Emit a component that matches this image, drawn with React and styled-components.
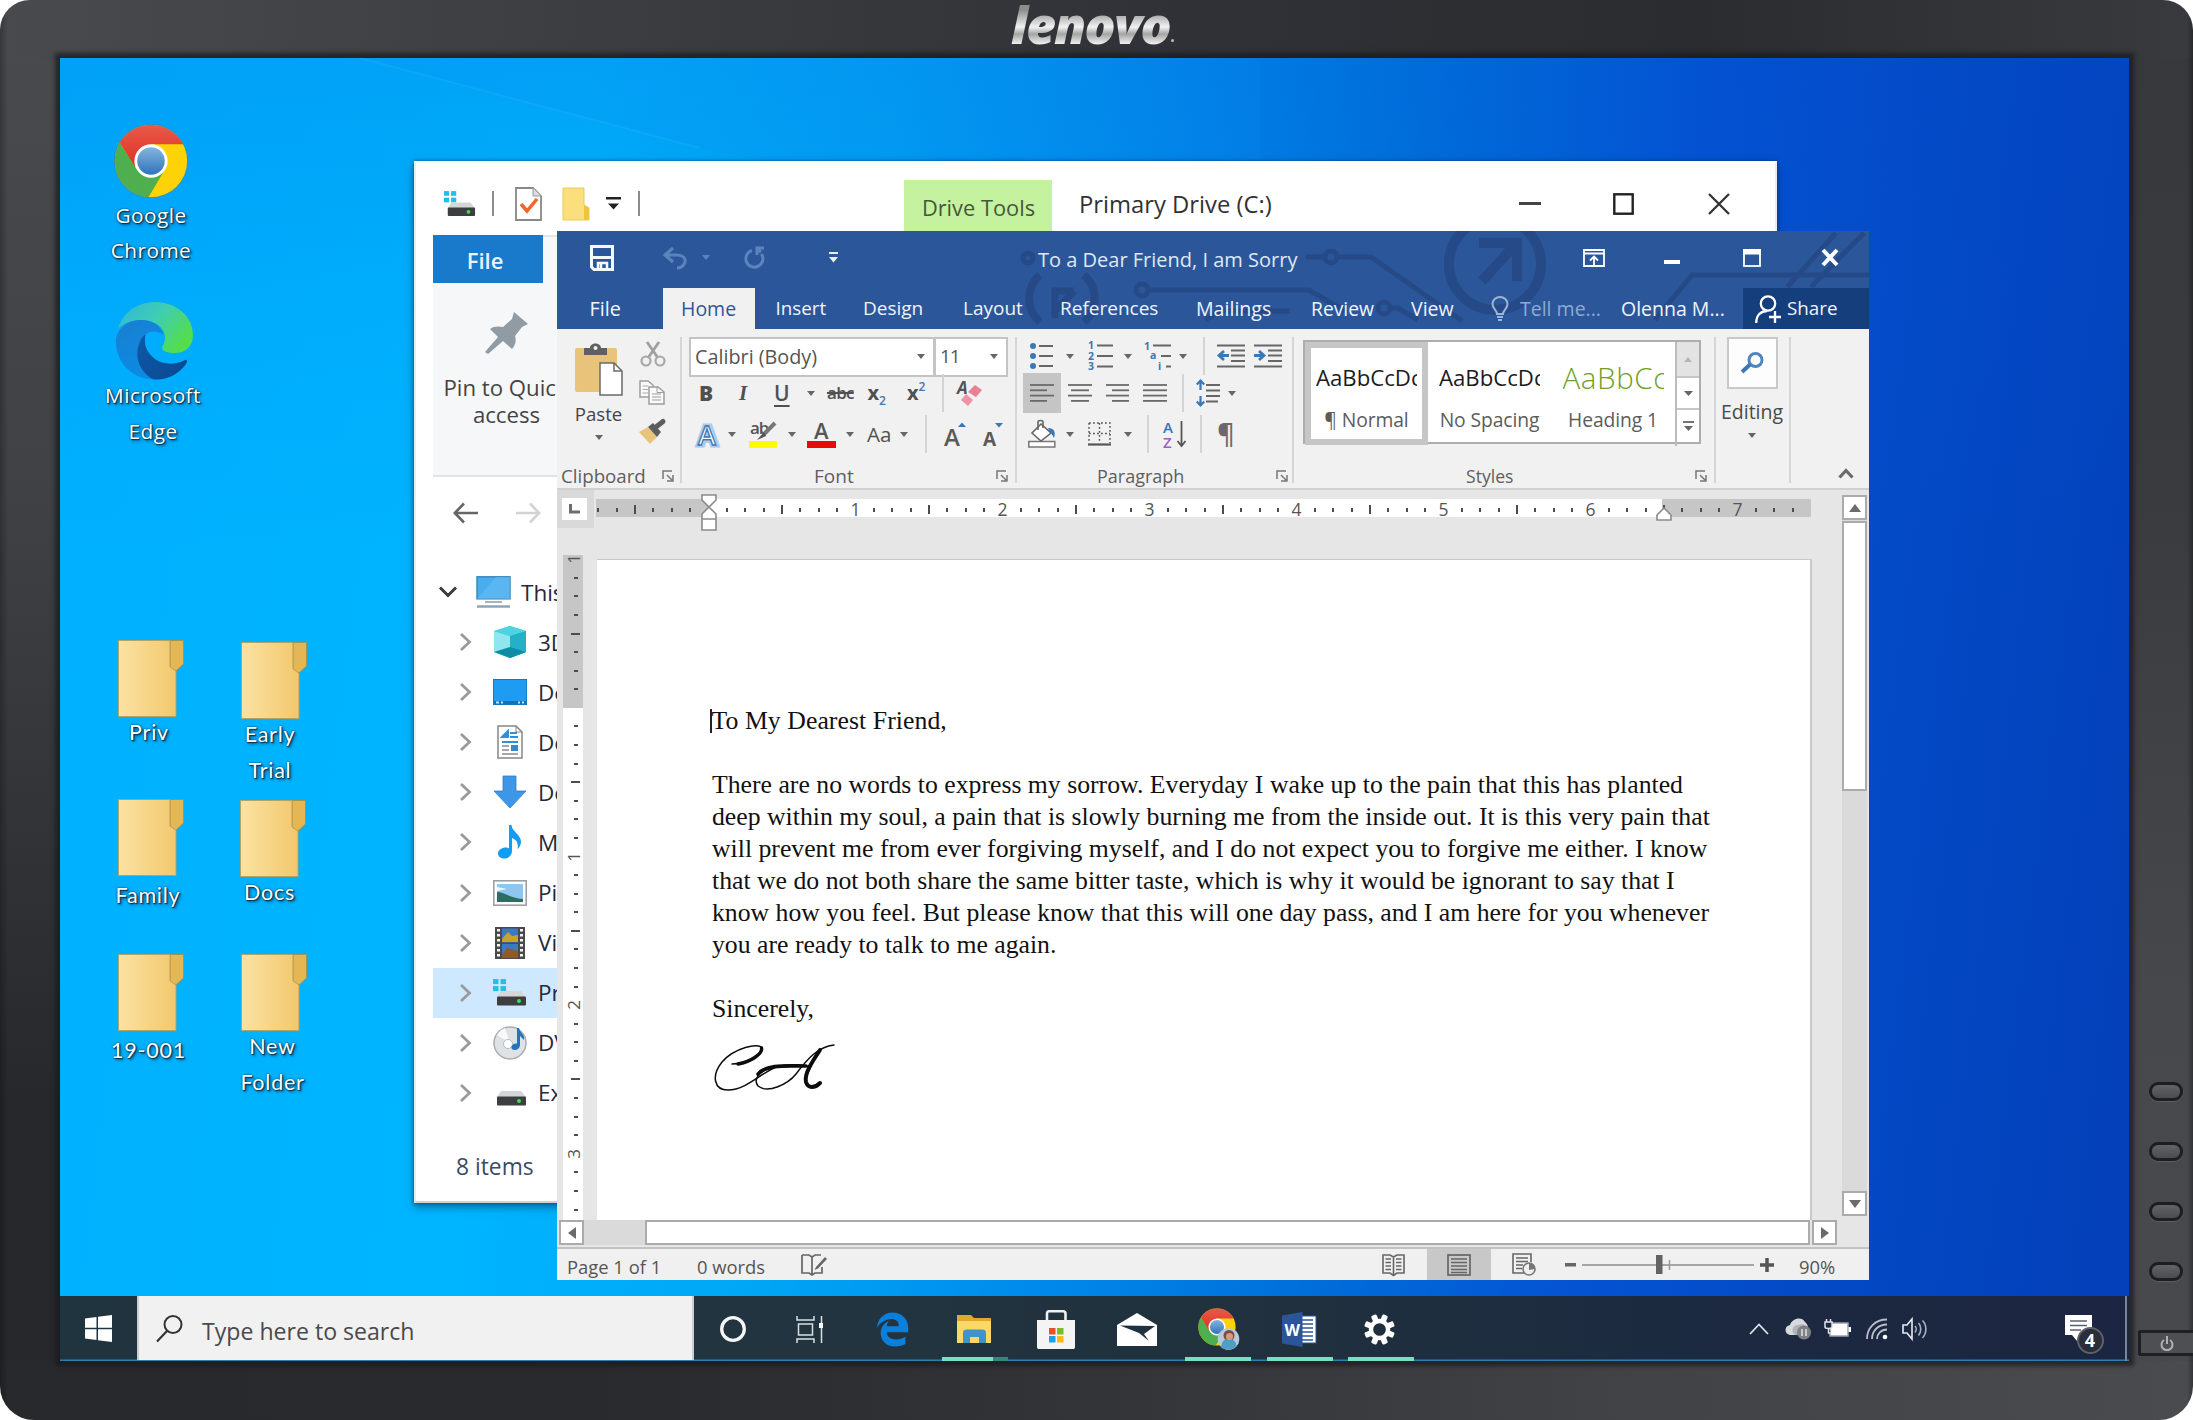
import React from 'react';
import styled, { createGlobalStyle, css } from 'styled-components';
import { FaEdgeLegacy } from 'react-icons/fa6';

const Global = createGlobalStyle`
  html, body { margin: 0; padding: 0; background: #fff; }
  body { width: 2193px; height: 1420px; overflow: hidden; font-family: "Open Sans", "Noto Sans", sans-serif; }
  *, *::before, *::after { box-sizing: border-box; }
  svg { display: block; flex: none; overflow: visible; }
`;

/* Turns a list of x stops into grid column widths. */
const tracks = (xs) => xs.slice(1).map((x, i) => `${(x - xs[i]).toFixed(1)}px`).join(' ');

/* ---------- Monitor ---------- */

const Monitor = styled.div`
  width: 2193px;
  height: 1420px;
  display: grid;
  grid-template-rows: 58px 1303px 59px;
  border-radius: 30px 30px 34px 34px;
  overflow: hidden;
  background:
    linear-gradient(90deg, rgba(0, 0, 0, 0.25) 0, transparent 8px, transparent 2187px, rgba(0, 0, 0, 0.3) 2193px),
    linear-gradient(90deg, #494a4e 0, #3a3b3f 700px, #303136 1200px, #2b2c30 1700px, #393a3d 2193px) 0 0 / 100% 58px no-repeat,
    linear-gradient(90deg, #28292d 0, #292a2e 600px, #333438 1100px, #414246 1600px, #4a4b4f 2193px) 0 100% / 100% 59px no-repeat,
    linear-gradient(180deg, #4a4b4f 0, #404145 500px, #27282c 1100px, #27282c 100%) 0 0 / 60px 100% no-repeat,
    linear-gradient(180deg, #37383b 0, #3a3b3e 500px, #47484b 1000px, #48494d 100%) 100% 0 / 64px 100% no-repeat,
    #303136;
`;

const BezelTop = styled.div`
  display: flex;
  align-items: flex-start;
  padding-left: 1011px;
`;

const Logo = styled.div`
  font: italic 800 52px/48px "Open Sans", sans-serif;
  letter-spacing: -2px;
  height: 58px;
  padding-right: 2px;
  color: transparent;
  background: linear-gradient(180deg, #8d8d8d 10px, #f2f2f2 27px, #a4a4a4 34px, #fff 46px);
  background-clip: text;
  -webkit-background-clip: text;
`;
const LogoDot = styled.div`
  width: 3px;
  height: 3px;
  border-radius: 50%;
  margin: 39px 0 0 -1px;
  background: #bbb;
`;

const Middle = styled.div`
  display: grid;
  grid-template-columns: 60px 2069px 64px;
`;
const LeftEdge = styled.div``;
const RightEdge = styled.div`
  display: flex;
  flex-direction: column;
  padding-top: 1024px;
`;
const BezelButton = styled.div`
  width: 34px;
  height: 19px;
  margin: 0 0 41px 20px;
  border: 3px solid #1d1e21;
  border-radius: 9px;
  background: linear-gradient(#626367, #4b4c50);
  box-shadow: 0 1px 1px rgba(255, 255, 255, 0.12);
`;
const PowerButton = styled.div`
  width: 55px;
  height: 26px;
  margin: 8px 0 0 9px;
  border: 3px solid #1f2023;
  border-right: 0;
  border-radius: 3px 0 0 3px;
  background: #4e4f53;
  display: grid;
  place-items: center;
`;

const Screen = styled.div`
  position: relative;
  display: flex;
  flex-direction: column;
  justify-content: flex-end;
  overflow: hidden;
  box-shadow: 0 0 4px 5px rgba(24, 26, 31, 0.72);
  background:
    linear-gradient(180deg, rgba(0, 70, 200, 0.15) 0, rgba(0, 80, 210, 0.06) 20%, transparent 38%),
    linear-gradient(97deg, #00b0ff 0, #00b5ff 24%, #00a6f6 38%, #0089eb 51%, #0070db 62%, #0454d3 74%, #0348c4 87%, #033fb8 100%);
`;

const Beam = styled.svg`
  position: absolute;
  left: 0;
  top: 0;
`;

/* ---------- Desktop shortcuts ---------- */

const Shortcut = styled.div`
  position: absolute;
  left: ${(p) => p.$x - 60 - 70}px;
  top: ${(p) => p.$y - 58}px;
  width: 140px;
  display: flex;
  flex-direction: column;
  align-items: center;
`;
const ShortcutLabel = styled.div`
  margin-top: ${(p) => p.$gap}px;
  margin-left: ${(p) => p.$shift || 0}px;
  text-align: center;
  white-space: pre;
  color: #fff;
  line-height: 35.5px;
  text-shadow: 1px 1px 1px #08334f, 0 0 2px rgba(0, 35, 65, 0.95), 2px 2px 3px rgba(0, 40, 70, 0.65);
  ${(p) => p.$soft
    ? css`font-family: Lato, "Open Sans", sans-serif; font-size: 21.5px; letter-spacing: 0.75px;`
    : css`font-size: 20.8px; letter-spacing: 0.45px;`}
`;

const ChromeIcon = ({ size, id }) => (
  <svg width={size} height={size} viewBox="0 0 100 100">
    <defs>
      <clipPath id={id}><circle cx="50" cy="50" r="49" /></clipPath>
      <linearGradient id={id + 'b'} x1="0" y1="0" x2="0" y2="1"><stop offset="0" stopColor="#86b4dd" /><stop offset="1" stopColor="#2f74bb" /></linearGradient>
      <linearGradient id={id + 'r'} x1="0" y1="0" x2="0" y2="1"><stop offset="0" stopColor="#ea5a48" /><stop offset="1" stopColor="#dd3228" /></linearGradient>
    </defs>
    <g clipPath={`url(#${id})`}>
      <rect width="100" height="100" fill="#fdd308" />
      <path d="M0 0V100H46L69 61L50 50L31 61L7 24Z" fill="#4fae4e" />
      <path d="M7 24L0 0H100V27.5H50V50L28 57Z" fill={`url(#${id}r)`} />
    </g>
    <circle cx="50" cy="50" r="49.5" fill="none" stroke="#7a6a3a" strokeOpacity=".45" />
    <circle cx="50" cy="50" r="22.5" fill="#fff" />
    <circle cx="50" cy="50" r="18.6" fill={`url(#${id}b)`} />
  </svg>
);

const EdgeIcon = () => (
  <svg width="77" height="78" viewBox="0 0 77 78">
    <defs>
      <linearGradient id="eg" x1="0" y1="0" x2="1" y2=".6"><stop offset="0" stopColor="#2fb6dc" /><stop offset=".5" stopColor="#3fcdb4" /><stop offset="1" stopColor="#54dd4c" /></linearGradient>
      <linearGradient id="eb" x1=".1" y1="0" x2=".7" y2="1"><stop offset="0" stopColor="#1a7fd0" /><stop offset="1" stopColor="#0a8ce6" /></linearGradient>
      <linearGradient id="ed" x1="0" y1="0" x2="1" y2=".7"><stop offset="0" stopColor="#0d59a6" /><stop offset="1" stopColor="#0b4a94" /></linearGradient>
    </defs>
    <path d="M2 27C7 9 23 0 39 0C60 0 77 14 77 33C77 45 69 51 59 51C52 51 46 49 46 46C46 44 49 42 49 35C49 25 38 18 25 18C14 18 5 23 2 27Z" fill="url(#eg)" />
    <path d="M0 40C0 28 10 18 25 18C38 18 47 26 47 33C43 29 36 28 30 32C20 42 20 62 34 75L40 77.500C16 78 0 60 0 40Z" fill="url(#eb)" />
    <path d="M29.500 32C18 42 17 66 37 77.300C52 79 66 70 71 60C71.500 58 70 57.500 69 58C58 64 46 62 39 57C30 50 27.500 42 29.500 32Z" fill="url(#ed)" />
  </svg>
);

const FolderIcon = () => (
  <svg width="66" height="77" viewBox="0 0 66 77">
    <defs><linearGradient id="fg" x1="0" x2="1" y1="0" y2="0"><stop offset="0" stopColor="#fbe2a2" /><stop offset="1" stopColor="#f2c86d" /></linearGradient></defs>
    <path d="M52 .5H65.500V24L58 31L52 28Z" fill="#e4b754" stroke="#b08a3c" strokeWidth=".8" />
    <path d="M.5 .5H52V27L58 31V76.500H.5Z" fill="url(#fg)" stroke="#b5a05c" strokeWidth=".9" />
  </svg>
);

/* ---------- Shared window parts ---------- */

const Tri = styled.i`
  display: block;
  width: 0;
  height: 0;
  border: 4.500px solid transparent;
  border-top: 5px solid ${(p) => p.$c || '#666'};
  border-bottom: 0;
  justify-self: start;
`;
const StopRow = styled.div`
  display: grid;
  grid-template-columns: ${(p) => tracks(p.$stops)};
  align-items: center;
  white-space: nowrap;
`;

/* ---------- Explorer ---------- */

const Explorer = styled.section`
  position: absolute;
  left: 354px;
  top: 103px;
  width: 1363px;
  height: 1042px;
  background: #fff;
  border: 2px solid #e9edf0;
  border-top-color: #fff;
  border-bottom-color: #cfd3d6;
  box-shadow: 0 4px 8px rgba(0, 45, 80, 0.55), 0 0 3px rgba(0, 45, 80, 0.6);
  display: flex;
  flex-direction: column;
`;
const ExplorerTitle = styled(StopRow)`
  height: 72px;
  padding: 8px 0 0 0;
  margin-left: -1px;
  flex: none;
`;
const Bar = styled.div`
  width: 2px;
  height: 25px;
  background: #8d8d8d;
`;
const DriveTools = styled.div`
  align-self: stretch;
  width: 148px;
  margin-top: 9px;
  background: #c5f29f;
  color: #46583a;
  font-size: 21.8px;
  line-height: 56px;
  text-align: center;
`;
const ExplorerName = styled.div`
  font-size: 23.800px;
  color: #333;
`;
const NavPane = styled.div`
  width: 180px;
  margin-left: 17px;
  flex: 1;
  display: flex;
  flex-direction: column;
`;
const ExplorerTabs = styled.div`
  height: 48px;
  display: flex;
  background: #f6f7f9;
  border-top: 2px solid #e4e6e9;
`;
const FileTab = styled.div`
  width: 110px;
  margin-top: -2px;
  background: #1979ca;
  color: #e9f3fb;
  font: 600 22px/50px "Open Sans", sans-serif;
  text-align: center;
  padding-right: 6px;
`;
const PinPane = styled.div`
  height: 194px;
  background: #f6f7f9;
  border-bottom: 2px solid #e1e3e6;
  padding: 29px 0 0 10px;
  color: #444;
  font-size: 22.200px;
  line-height: 27px;
  white-space: nowrap;
`;
const PinGlyph = styled.div`
  margin: 0 0 20px 42px;
`;
const PinText = styled.div`
  width: 125px;
  text-align: center;
  margin-left: ${(p) => p.$x || 0}px;
`;
const NavArrows = styled.div`
  height: 71px;
  display: flex;
  align-items: center;
  gap: 38px;
  padding-left: 20px;
`;
const TreeRow = styled.div`
  height: ${(p) => (p.$root ? 54 : 50.1)}px;
  display: grid;
  grid-template-columns: ${(p) => (p.$root ? '37px 45px 1fr' : '60px 45px 1fr')};
  padding-top: ${(p) => (p.$root ? 4 : 0)}px;
  align-items: center;
  padding-left: ${(p) => (p.$root ? 6 : 0)}px;
  font-size: 22.500px;
  color: #26283c;
  white-space: nowrap;
  background: ${(p) => (p.$on ? '#cde8ff' : 'transparent')};
  & > svg:first-child { margin-left: ${(p) => (p.$root ? 0 : 27)}px; }
`;
const Tree = styled.div`
  padding-top: 15px;
`;
const ItemCount = styled.div`
  margin: 29px 0 0 23px;
  font-size: 22.800px;
  line-height: 40px;
  color: #3d4a63;
`;

const DriveIcon = ({ w = 34, flag = true }) => (
  <svg width={w} height={w * 0.8} viewBox="0 0 34 27">
    {flag && <g fill="#24bfe6"><rect x="0" y="0" width="5.5" height="5" /><rect x="7.500" y="0" width="5.5" height="5" /><rect x="0" y="7" width="5.5" height="5" /><rect x="7.500" y="7" width="5.5" height="5" /></g>}
    <path d="M8 12H28L33 18H4Z" fill="#d4d6d8" />
    <rect x="4" y="17.500" width="29" height="9" rx="1" fill="#3c3e40" />
    <circle cx="26" cy="22" r="2" fill="#3ce04a" />
  </svg>
);
const ChevronRight = () => <svg width="11" height="18" viewBox="0 0 11 18"><path d="M1 1L9.500 9L1 17" fill="none" stroke="#9a9a9a" strokeWidth="2.800" /></svg>;

const treeIcons = {
  cube: <svg width="34" height="34" viewBox="0 0 34 34"><path d="M17 1L33 6V27L17 33L1 27V6Z" fill="#3cc7d8" /><path d="M1 6L17 11V33L1 27Z" fill="#8fe6ee" /><path d="M1 6L17 1L33 6L17 11Z" fill="#4fd3e0" /><path d="M17 11L33 6V27L17 33Z" fill="#24b0c8" /><path d="M1 27L17 22L33 27L17 33Z" fill="#0c8da5" /></svg>,
  desktop: <svg width="34" height="26" viewBox="0 0 34 26"><rect x=".5" y=".5" width="33" height="25" fill="#1e9bf3" stroke="#1579c0" /><path d="M1 22H33V25H1Z" fill="#1272b8" /><path d="M3 23.500H6M8 23.500H10M25 23.500H27M29 23.500H31" stroke="#bfe3ff" strokeWidth="2" /></svg>,
  doc: <svg width="34" height="34" viewBox="0 0 34 34"><path d="M5 1H23L29 7V33H5Z" fill="#fff" stroke="#868686" strokeWidth="1.500" /><path d="M23 1V7H29" fill="none" stroke="#868686" /><path d="M9 12L15 6V12ZM17 8H24M17 12H25M9 17H25" stroke="#2f8fdc" strokeWidth="2" fill="#2f8fdc" /><path d="M9 21H16M9 25H16M9 29H25" stroke="#8a8a8a" strokeWidth="1.500" /><rect x="18" y="20" width="7" height="6" fill="#3a87c8" /></svg>,
  down: <svg width="34" height="34" viewBox="0 0 34 34"><path d="M10 1H23V16H33L17 33L1 16H10Z" fill="#3d96e6" stroke="#2f7fca" strokeWidth=".8" /></svg>,
  music: <svg width="34" height="34" viewBox="0 0 34 34"><path d="M16 0H18.500C19 7 28 9 28 17C28 20 26 23 24.500 24C26 17 22 14 19 13V26C19 31 15 33.500 11 33.500C7 33.500 5 31 5 28.500C5 25 9 22.500 12.500 22.500C14 22.500 15 22.800 16 23.300Z" fill="#149cf0" /></svg>,
  pic: <svg width="34" height="26" viewBox="0 0 34 26"><rect x=".8" y=".8" width="32.400" height="24.400" fill="#fff" stroke="#9a9a9a" strokeWidth="1.500" /><rect x="4" y="4" width="26" height="18" fill="#8fc6ee" /><path d="M4 12C11 12 17 18 30 19V22H4Z" fill="#2e6e62" /><path d="M4 7L14 9L4 11Z" fill="#eef7fd" /></svg>,
  video: <svg width="34" height="34" viewBox="0 0 34 34"><rect x="2" y="1" width="30" height="32" fill="#4a4a4a" /><rect x="9" y="2.500" width="16" height="14" fill="#3d79c2" /><rect x="9" y="18" width="16" height="14" fill="#3d79c2" /><path d="M9 13L15 6L19 10L25 9V16H9Z" fill="#c9a227" /><path d="M9 29L14 22L25 25V32H9Z" fill="#8d5b2a" /><path d="M5.500 3V32M28.500 3V32" stroke="#f3f3f3" strokeWidth="3" strokeDasharray="2.500 2.500" /></svg>,
  prim: <DriveIcon w={34} />,
  dvd: <svg width="34" height="34" viewBox="0 0 34 34"><circle cx="17" cy="17" r="16" fill="#dfe2e5" stroke="#a9aeb2" strokeWidth="1.500" /><path d="M17 17L4 9A16 16 0 0 1 12 2Z" fill="#f8f9fa" /><circle cx="15" cy="18" r="4.500" fill="#fff" stroke="#b5babf" /><path d="M24 2H26C27 7 32 8 31 14L27 10V19C27 22 24 24 21.500 24C19 24 18 22 18.500 20.500C19 18.500 21.500 17 24 17.500Z" fill="#2474bb" /></svg>,
  ext: <DriveIcon w={34} flag={false} />,
};
const treeRows = [['cube', '3D Objects'], ['desktop', 'Desktop'], ['doc', 'Documents'], ['down', 'Downloads'], ['music', 'Music'], ['pic', 'Pictures'], ['video', 'Videos'], ['prim', 'Primary Drive'], ['dvd', 'DVD Drive'], ['ext', 'External Drive']];

const ExplorerWindow = () => (
  <Explorer>
    <ExplorerTitle $stops={[414, 442.6, 490.7, 514, 561, 605, 636.7, 903.5, 1078, 1518, 1612, 1707, 1774]}>
      <span />
      <DriveIcon w={32} />
      <Bar />
      <svg width="27" height="34" viewBox="0 0 27 34"><path d="M1 1H18L26 9V33H1Z" fill="#fff" stroke="#888" strokeWidth="1.800" /><path d="M18 1V9H26" fill="#ddd" stroke="#999" /><path d="M6 17L12 24L22 12" fill="none" stroke="#f0672c" strokeWidth="3.500" /></svg>
      <svg width="28" height="34" viewBox="0 0 28 34"><path d="M1 1H22V18L27 21V33H1Z" fill="#fadf7c" stroke="#e9c95c" /><path d="M22 18L27 21V33H22Z" fill="#eec53e" /></svg>
      <svg width="15" height="13" viewBox="0 0 15 13"><rect width="15" height="2.500" fill="#222" /><path d="M2 6.500H13L7.500 12.500Z" fill="#222" /></svg>
      <Bar />
      <DriveTools>Drive Tools</DriveTools>
      <ExplorerName>Primary Drive (C:)</ExplorerName>
      <svg width="22" height="4"><rect width="22" height="3" fill="#444" /></svg>
      <svg width="21" height="22"><rect x="1.300" y="1.300" width="18.400" height="19.400" fill="none" stroke="#222" strokeWidth="2.400" /></svg>
      <svg width="22" height="22"><path d="M1 1L21 21M21 1L1 21" stroke="#333" strokeWidth="2.300" /></svg>
    </ExplorerTitle>
    <NavPane>
      <ExplorerTabs><FileTab>File</FileTab></ExplorerTabs>
      <PinPane>
        <PinGlyph><svg width="43" height="42" viewBox="0 0 43 42"><path d="M29 0L43 12L37 15L30 24C32 30 29 35 27 37L18 29L3 42L0 40L13 25L5 17C8 14 14 14 18 15L27 7Z" fill="#909ba3" /></svg></PinGlyph>
        <PinText>Pin to Quick</PinText>
        <PinText $x={1}>access</PinText>
      </PinPane>
      <NavArrows>
        <svg width="25" height="22" viewBox="0 0 25 22"><path d="M25 11H2M11 1.500L1.800 11L11 20.500" fill="none" stroke="#666" strokeWidth="2.600" /></svg>
        <svg width="25" height="22" viewBox="0 0 25 22"><path d="M0 11H23M14 1.500L23.200 11L14 20.500" fill="none" stroke="#d3d3d3" strokeWidth="2.600" /></svg>
      </NavArrows>
      <Tree>
        <TreeRow $root>
          <svg width="18" height="12" viewBox="0 0 18 12"><path d="M1 1.500L9 9.500L17 1.500" fill="none" stroke="#3a3a3a" strokeWidth="3" /></svg>
          <svg width="35" height="32" viewBox="0 0 35 32"><rect x="1" y=".8" width="33" height="22" fill="#49adf0" stroke="#3d88bb" strokeWidth="1.500" /><path d="M1 23L20 1H34V23Z" fill="#6cc0f6" opacity=".5" /><path d="M9 26H26" stroke="#a7b4bd" strokeWidth="2" /><path d="M1 30.500H34" stroke="#8fa5b5" strokeWidth="2.500" /></svg>
          <span>This PC</span>
        </TreeRow>
        {treeRows.map(([k, t]) => (
          <TreeRow key={k} $on={k === 'prim'}><ChevronRight />{treeIcons[k]}<span>{t}</span></TreeRow>
        ))}
      </Tree>
      <ItemCount>8 items</ItemCount>
    </NavPane>
  </Explorer>
);

/* ---------- Word ---------- */

const Word = styled.section`
  position: absolute;
  left: 497px;
  top: 173px;
  width: 1312px;
  height: 1049px;
  display: flex;
  flex-direction: column;
  overflow: hidden;
  background: #e6e6e6;
  color: #444;
  font-size: 19px;
`;
const WordHead = styled.header`
  position: relative;
  height: 98px;
  flex: none;
  background: #2b579a;
  overflow: hidden;
`;
const HeadArt = styled.svg`
  position: absolute;
  left: 0;
  top: 0;
`;
const TitleRow = styled(StopRow)`
  position: relative;
  height: 57px;
  padding-bottom: 4px;
  color: #dfe8f4;
`;
const WordTitle = styled.div`
  font-size: 20px;
  padding-top: 4px;
`;
const WinMin = styled.div`
  padding-top: 8px;
`;
const TabRow = styled.nav`
  position: relative;
  height: 41px;
  display: grid;
  grid-template-columns: ${(p) => tracks(p.$stops)};
  line-height: 41px;
  white-space: nowrap;
  color: #f0f4fa;
`;
const Tab = styled.div`
  font-size: ${(p) => p.$size || 19}px;
  color: ${(p) => (p.$dim ? '#8ea9d3' : 'inherit')};
`;
const HomeTab = styled.div`
  width: 92px;
  padding-left: 18px;
  font-size: 19.5px;
  background: #f1f1f1;
  color: #2b579a;
`;
const ShareTab = styled(Tab)`
  display: flex;
  align-items: center;
  gap: 6px;
  padding-left: 12px;
  background: #143f7c;
`;
const Center = styled.div`
  display: grid;
  align-items: center;
`;

const Ribbon = styled.div`
  height: 161px;
  flex: none;
  display: flex;
  background: #f1f1f1;
  border-bottom: 2px solid #d0d0d0;
`;
const Group = styled.div`
  width: ${(p) => p.$w}px;
  flex: none;
  margin: 8px 0 5px;
  border-right: 2px solid #d6d6d6;
  display: grid;
  grid-template-rows: 35px 42px 40px 15px 14px;
`;
const RibbonRow = styled(StopRow)``;
const GroupFoot = styled.div`
  grid-row: 5;
  display: flex;
  align-items: center;
  line-height: 14px;
  color: #5e5e5e;
  font-size: ${(p) => p.$size || 18.5}px;
  padding: 0 ${(p) => p.$r || 8}px 0 ${(p) => p.$l || 0}px;
  white-space: nowrap;
  & > svg { margin-left: auto; }
`;
const Divider = styled.div`
  width: 1.500px;
  height: 38px;
  background: #d4d4d4;
`;
const Combo = styled.div`
  height: 40px;
  width: ${(p) => p.$w}px;
  display: flex;
  align-items: center;
  justify-content: space-between;
  padding: 0 8px 2px 4px;
  background: #fff;
  border: 2px solid #c4c4c4;
  font-size: ${(p) => p.$size || 19.800}px;
  letter-spacing: ${(p) => p.$ls || 0}px;
  color: #555;
`;
const Letter = styled.span`
  font-size: ${(p) => p.$size || 21}px;
  font-weight: ${(p) => p.$weight || 400};
  font-style: ${(p) => (p.$italic ? 'italic' : 'normal')};
  font-family: ${(p) => (p.$serif ? '"Liberation Serif", serif' : 'inherit')};
  text-decoration: ${(p) => p.$deco || 'none'};
  text-underline-offset: 4px;
  text-decoration-thickness: 2px;
  letter-spacing: ${(p) => p.$ls || 0}px;
  line-height: 30px;
  color: ${(p) => p.$c || '#505050'};
`;
const Small = styled.small`
  font-size: 12px;
  font-weight: 600;
  color: #3a77b5;
  display: inline-block;
  line-height: 10px;
  transform: translateY(${(p) => p.$dy}px);
`;
const PasteCell = styled.div`
  grid-row: 1 / 4;
  display: grid;
  grid-template-columns: 82px 1fr;
`;
const PasteButton = styled.div`
  display: flex;
  flex-direction: column;
  align-items: center;
  padding-top: 6px;
  padding-left: 1px;
  font-size: 18.600px;
  line-height: 27px;
  color: #444;
`;
const ClipTools = styled.div`
  display: grid;
  grid-template-rows: 34px 42px 38px;
  align-items: center;
`;
const ActiveTool = styled.div`
  width: 38px;
  height: 40px;
  background: #c5c5c5;
  display: grid;
  place-items: center;
`;
const Gallery = styled.div`
  grid-row: 1 / 4;
  width: 398px;
  height: 104px;
  margin: 3px 0 0 9px;
  border: 2px solid #adadad;
  background: #fff;
  display: grid;
  grid-template-columns: 123px 123px 124px 24px;
`;
const Style = styled.div`
  margin: 0 0 1px;
  display: flex;
  flex-direction: column;
  align-items: center;
  justify-content: flex-start;
  padding-top: ${(p) => (p.$on ? 11 : 17)}px;
  border: ${(p) => (p.$on ? '6.500px solid #c6c6c6' : '0')};
  white-space: nowrap;
  color: #5c5c5c;
  line-height: 38px;
  font-size: 19.3px;
  letter-spacing: -0.1px;
`;
const Sample = styled.div`
  width: 101px;
  height: 42px;
  overflow: hidden;
  font-size: ${(p) => (p.$big ? 29.5 : 22.2)}px;
  font-weight: ${(p) => (p.$big ? 300 : 400)};
  letter-spacing: ${(p) => (p.$big ? 0.6 : 0)}px;
  line-height: 38px;
  color: ${(p) => (p.$big ? '#6fa025' : '#1c1c1c')};
`;
const GalleryScroll = styled.div`
  border-left: 2px solid #bdbdbd;
  display: grid;
  grid-template-rows: 36px 32px 32px;
  & > div { display: grid; place-items: center; border-bottom: 2px solid #c6c6c6; }
  & > div:first-child { background: #e3e3e3; }
  & > div:last-child { border: 0; }
`;
const EditingCell = styled.div`
  grid-row: 1 / 4;
  display: flex;
  flex-direction: column;
  align-items: center;
  padding-right: 1px;
  font-size: 19.500px;
  line-height: 26px;
  color: #4a4a4a;
`;
const FindBox = styled.div`
  width: 51px;
  height: 52px;
  border: 2px solid #c9c9c9;
  background: #fdfdfd;
  display: grid;
  place-items: center;
  margin-bottom: 10px;
`;
const Collapse = styled.div`
  padding: 139px 0 0 47px;
`;

const Launcher = () => (
  <svg width="12" height="12" viewBox="0 0 12 12"><path d="M1 9V1H10M5 5L10 10M11 5V11H5" fill="none" stroke="#777" strokeWidth="1.500" /></svg>
);
const Lines = ({ rows, w = 24 }) => (
  <svg width={w} height="18" viewBox={`0 0 ${w} 18`}>{rows.map(([a, b], i) => <path key={i} d={`M${a} ${1 + i * 5.3}H${b}`} stroke="#6a6a6a" strokeWidth="1.800" />)}</svg>
);

const Workspace = styled.div`
  height: 730px;
  flex: none;
  display: grid;
  grid-template-columns: 1285px 25px;
`;
const Canvas = styled.div`
  display: grid;
  grid-template-rows: 38px 1fr;
`;
const RulerRow = styled.div`
  display: flex;
`;
const TabSelector = styled.div`
  width: 37px;
  background: #fff;
  border: 5px solid #d9d9d9;
  border-width: 8px 7px 8px 5px;
  display: grid;
  place-items: center;
`;
const Ruler = styled.div`
  position: relative;
  width: 1215px;
  height: 18px;
  margin: 9px 0 0 2px;
  background: linear-gradient(90deg, #c6c6c6 112px, #fff 112px, #fff 1066px, #c6c6c6 1066px);
`;
const Ticks = styled.div`
  display: flex;
  height: 18px;
  margin-left: -7px;
`;
const Tick = styled.div`
  width: 18.38px;
  flex: none;
  display: flex;
  align-items: center;
  justify-content: center;
  font-size: 17.5px;
  line-height: 18px;
  color: #555;
  padding-top: ${(p) => (p.$kind === 'num' ? 1 : 3)}px;
  &::before {
    content: '';
    display: ${(p) => (p.$kind === 'num' ? 'none' : 'block')};
    width: 2px;
    height: ${(p) => (p.$kind === 'tall' ? 9 : p.$kind === 'dot' ? 4 : 0)}px;
    background: #4c4c4c;
  }
`;
const LeftMarker = styled.svg`
  position: absolute;
  left: 105px;
  top: -5px;
`;
const RightMarker = styled.svg`
  position: absolute;
  left: 1060px;
  top: 8px;
`;
const DocRow = styled.div`
  display: flex;
  overflow: hidden;
`;
const VRuler = styled.div`
  width: 20px;
  margin: 27px 14px 0 6px;
  flex: none;
  overflow: hidden;
  background: linear-gradient(180deg, #c6c6c6 153px, #fff 153px);
`;
const VTicks = styled.div`
  margin-top: -5px;
`;
const VTick = styled.div`
  height: 18.59px;
  width: 20px;
  display: flex;
  align-items: center;
  justify-content: center;
  font-size: 17px;
  line-height: 18px;
  color: #555;
  padding-left: ${(p) => (p.$kind === 'num' ? 2 : 5)}px;
  & > span { transform: rotate(-90deg); }
  &::before {
    content: '';
    display: ${(p) => (p.$kind === 'num' ? 'none' : 'block')};
    height: 2px;
    width: ${(p) => (p.$kind === 'tall' ? 9 : p.$kind === 'dot' ? 4 : 0)}px;
    background: #4c4c4c;
  }
`;
const Page = styled.article`
  width: 1215px;
  margin-top: 31px;
  padding: 145px 0 0 115px;
  background: #fff;
  border-top: 1px solid #c9c9c9;
  border-right: 2px solid #c9c9c9;
  font: 25.740px/32px "Liberation Serif", "Times New Roman", serif;
  color: #111;
  white-space: nowrap;
`;
const Salutation = styled.p`
  margin: 0 0 32px;
  display: flex;
  align-items: center;
  letter-spacing: 0.06px;
  &::before { content: ''; width: 1.500px; height: 24px; background: #222; margin-left: -2px; }
`;
const Para = styled.p`
  margin: 0 0 31.500px;
  & > span { display: block; }
`;
const Signature = styled.div`
  margin: -12px 0 0 2px;
`;

const Arrow = styled.i`
  width: 0;
  height: 0;
  border: 6px solid transparent;
  ${(p) => p.$d === 'up' && css`border-bottom: 8px solid #6b6b6b; border-top: 0;`}
  ${(p) => p.$d === 'down' && css`border-top: 8px solid #6b6b6b; border-bottom: 0;`}
  ${(p) => p.$d === 'left' && css`border-right: 8px solid #6b6b6b; border-left: 0;`}
  ${(p) => p.$d === 'right' && css`border-left: 8px solid #6b6b6b; border-right: 0;`}
`;
const ScrollButton = styled.div`
  width: 25px;
  height: 25px;
  flex: none;
  background: #fff;
  border: 2px solid #ababab;
  display: grid;
  place-items: center;
`;
const VScroll = styled.div`
  margin-top: 5px;
  display: flex;
  flex-direction: column;
`;
const VTrack = styled.div`
  height: 671px;
  padding-top: 1px;
  background: #dadada;
`;
const VThumb = styled.div`
  height: 270px;
  background: #fff;
  border: 2px solid #ababab;
`;
const HScroll = styled.div`
  height: 29px;
  flex: none;
  display: flex;
  padding-left: 2px;
  border-bottom: 2px solid #c2c2c2;
`;
const HTrack = styled.div`
  width: 1226px;
  margin-right: 2px;
  height: 25px;
  background: #dadada;
  padding-left: 61px;
`;
const HThumb = styled.div`
  height: 25px;
  background: #fff;
  border: 2px solid #ababab;
`;
const Status = styled.footer`
  height: 31px;
  flex: none;
  display: grid;
  grid-template-rows: 31px;
  grid-template-columns: ${(p) => tracks(p.$stops)};
  align-items: center;
  background: #f0f0f0;
  font-size: 18.400px;
  line-height: 26px;
  white-space: nowrap;
  color: #555;
`;
const PrintView = styled.div`
  width: 64px;
  height: 31px;
  background: #c8c8c8;
  display: grid;
  place-items: center;
`;
const Down = styled.div`
  padding-top: 4px;
`;

const kindOf = (k) => (k === 0 ? 'none' : k % 8 === 0 ? 'num' : k % 4 === 0 ? 'tall' : 'dot');
const hTicks = Array.from({ length: 66 }, (_, i) => i - 6).filter((k) => k < 60);
const vTicks = Array.from({ length: 36 }, (_, i) => i - 8);

const lines = [
  'There are no words to express my sorrow. Everyday I wake up to the pain that this has planted',
  'deep within my soul, a pain that is slowly burning me from the inside out. It is this very pain that',
  'will prevent me from ever forgiving myself, and I do not expect you to forgive me either. I know',
  'that we do not both share the same bitter taste, which is why it would be ignorant to say that I',
  'know how you feel. But please know that this will one day pass, and I am here for you whenever',
  'you are ready to talk to me again.',
];

const WordHeader = () => (
  <WordHead>
    <HeadArt width="1312" height="98" viewBox="557 231 1312 98" fill="none" stroke="#254a87" strokeWidth="5">
      <circle cx="1495" cy="264" r="46" strokeWidth="10" />
      <path d="M1479 243H1517V281M1515 245L1482 281" strokeWidth="10" />
      <path d="M1040 275A31 31 0 0 0 1040 322M1084 275A31 31 0 0 1 1084 322" strokeWidth="8" />
      <path d="M1052 291H1074M1055 289V318M1074 291L1056 310" strokeWidth="7" />
      <circle cx="1028" cy="258" r="5" />
      <circle cx="1331" cy="257" r="6" />
      <path d="M1306 257H1325M1337 257H1371L1462 321" />
      <circle cx="1142" cy="290" r="6" />
      <path d="M1148 290H1309L1345 311M1205 320L1220 311H1290M1391 308H1398L1418 320" />
      <circle cx="1384" cy="308" r="6" />
      <path d="M1655 320L1692 275H1869M1836 233L1787 287M1864 233L1811 287" />
    </HeadArt>
    <TitleRow $stops={[557, 589.5, 663, 702, 743, 829, 1038, 1582.6, 1664, 1743, 1821, 1869]}>
      <span />
      <svg width="24" height="26" viewBox="0 0 24 26"><path d="M1.500 1.500H22.500V24.500H4L1.500 22Z" fill="none" stroke="#f4f7fb" strokeWidth="3" /><path d="M2 12.500H22" stroke="#f4f7fb" strokeWidth="3" /><path d="M8 25V18H17V25M11 19V25" stroke="#f4f7fb" strokeWidth="2.500" fill="none" /></svg>
      <svg width="25" height="22" viewBox="0 0 25 22"><path d="M10 1L2 8L10 15M2 8H14C21 8 24 13 21 17C20 19 17 21 14 21" fill="none" stroke="#5d83bf" strokeWidth="3" /></svg>
      <Tri $c="#5d83bf" />
      <svg width="23" height="23" viewBox="0 0 23 23"><path d="M21 2H14V9M14 3L18 6M9 4.500A8.500 8.500 0 1 0 18.500 8" fill="none" stroke="#5d83bf" strokeWidth="3" /></svg>
      <svg width="9" height="11" viewBox="0 0 9 11"><path d="M0 1H9" stroke="#e8eef7" strokeWidth="2" /><path d="M0 5H9L4.500 10.500Z" fill="#e8eef7" /></svg>
      <WordTitle>To a Dear Friend, I am Sorry</WordTitle>
      <svg width="22" height="18" viewBox="0 0 22 18"><path d="M1 1H21V17H1ZM1 4.500H21" fill="none" stroke="#fff" strokeWidth="1.800" /><path d="M11 16V7.500M7 11.500L11 7.500L15 11.500" fill="none" stroke="#fff" strokeWidth="1.800" /></svg>
      <WinMin><svg width="16" height="4"><rect width="16" height="4" fill="#fff" /></svg></WinMin>
      <svg width="18" height="18"><rect x="1" y="1" width="16" height="16" fill="none" stroke="#fff" strokeWidth="1.800" /><rect width="18" height="5.500" fill="#fff" /></svg>
      <svg width="18" height="17" viewBox="0 0 18 17"><path d="M2 1L16 16M16 1L2 16" stroke="#fff" strokeWidth="4" /></svg>
    </TitleRow>
    <TabRow $stops={[557, 589.5, 663, 775.5, 863, 963, 1060, 1196, 1311, 1411, 1491, 1520, 1621, 1743, 1869]}>
      <span />
      <Tab $size={19.800}>File</Tab>
      <HomeTab>Home</HomeTab>
      <Tab $size={18.800}>Insert</Tab>
      <Tab>Design</Tab>
      <Tab>Layout</Tab>
      <Tab>References</Tab>
      <Tab $size={19.600}>Mailings</Tab>
      <Tab $size={19.300}>Review</Tab>
      <Tab $size={19.500}>View</Tab>
      <Center><svg width="18" height="25" viewBox="0 0 18 25"><path d="M6 18C6 14 1.500 13 1.500 8A7.500 7 0 0 1 16.500 8C16.500 13 12 14 12 18ZM6 21H12M7 24H11" fill="none" stroke="#9db4d9" strokeWidth="2" /></svg></Center>
      <Tab $dim $size={19.500}>Tell me...</Tab>
      <Tab $size={19.500}>Olenna M...</Tab>
      <ShareTab $size={18.800}>
        <svg width="26" height="28" viewBox="0 0 26 28"><circle cx="13" cy="8.500" r="7.200" fill="none" stroke="#fff" strokeWidth="2.300" /><path d="M1.200 28C1.200 20 6 16 12 16M14 22H26M20 16V28" fill="none" stroke="#fff" strokeWidth="2.300" /></svg>
        Share
      </ShareTab>
    </TabRow>
  </WordHead>
);

const RibbonBar = () => (
  <Ribbon>
    <Group $w={125}>
      <PasteCell>
        <PasteButton>
          <svg width="48" height="53" viewBox="0 0 48 53"><rect x="0" y="5" width="42" height="44" rx="2" fill="#eac37b" /><path d="M9 5H15C15 -1 26 -1 26 5H32V12H9Z" fill="#5f5f5f" /><circle cx="20.500" cy="5" r="2" fill="#f1f1f1" /><path d="M25 20H39L47 28V52H25Z" fill="#fff" stroke="#6a6a6a" strokeWidth="1.500" /><path d="M39 20V28H47" fill="none" stroke="#6a6a6a" strokeWidth="1.500" /></svg>
          <Down>Paste</Down>
          <Down><Down><Tri /></Down></Down>
        </PasteButton>
        <ClipTools>
          <svg width="28" height="26" viewBox="0 0 28 26"><path d="M8 1L19 17M20 1L9 17" stroke="#a0a0a0" strokeWidth="2.800" /><circle cx="7" cy="20" r="4.500" fill="none" stroke="#a8a8a8" strokeWidth="2.200" /><circle cx="21" cy="20" r="4.500" fill="none" stroke="#a8a8a8" strokeWidth="2.200" /></svg>
          <svg width="26" height="25" viewBox="0 0 26 25"><path d="M1 1H9L14 5V17H1Z" fill="#fafafa" stroke="#9d9d9d" strokeWidth="1.500" /><path d="M3.500 6H9M3.500 9.500H9M3.500 13H9" stroke="#aaa" /><path d="M10 7H19L25 12V24H10Z" fill="#fafafa" stroke="#9d9d9d" strokeWidth="1.500" /><path d="M18 7V12.500H25M13 14H22M13 17H22M13 20H22" fill="none" stroke="#9d9d9d" /></svg>
          <svg width="27" height="25" viewBox="0 0 27 25"><path d="M0 12L9 7L18 17L11 24Z" fill="#eac37b" /><path d="M9 7L14 3L22 12L18 17Z" fill="#5d5d5d" /><path d="M17 7L24 1.500" stroke="#5d5d5d" strokeWidth="5" strokeLinecap="round" /></svg>
        </ClipTools>
      </PasteCell>
      <GroupFoot $l={4} $r={6} $size={18.700}>Clipboard<Launcher /></GroupFoot>
    </Group>

    <Group $w={335}>
      <RibbonRow $stops={[682, 689, 934, 1016]}>
        <span />
        <Combo $w={246}>Calibri (Body)<Tri /></Combo>
        <Combo $w={74} $size={19} $ls={-1}>11<Tri /></Combo>
      </RibbonRow>
      <RibbonRow $stops={[682, 699, 739, 774, 807, 827, 867.5, 907, 942, 958, 1016]}>
        <span />
        <Letter $weight={800}>B</Letter>
        <Letter $italic $serif $weight={700}>I</Letter>
        <Letter $weight={600} $deco="underline">U</Letter>
        <Tri />
        <Letter $size={17} $weight={600} $deco="line-through" $ls={-0.7}>abc</Letter>
        <Letter $weight={700} $size={20}>x<Small $dy={5}>2</Small></Letter>
        <Letter $weight={700} $size={20}>x<Small $dy={-9}>2</Small></Letter>
        <Divider />
        <svg width="24" height="26" viewBox="0 0 24 26"><text x="-1" y="14" fontSize="17" fontStyle="italic" fontWeight="700" fill="#555">A</text><path d="M17 5L24 10L18 17L10 12Z" fill="#ea8095" /><path d="M8 14L15 20L10 26L3 20Z" fill="#ee93a5" /></svg>
      </RibbonRow>
      <RibbonRow $stops={[682, 697, 728, 749, 788, 807, 846, 867, 900, 925, 944, 983, 1016]}>
        <span />
        <svg width="22" height="25" viewBox="0 0 22 25"><text x="1" y="23" fontSize="27" fontWeight="700" fill="#fff" stroke="#a9cbee" strokeWidth="5" paintOrder="stroke">A</text><text x="1" y="23" fontSize="27" fontWeight="600" fill="#fff" stroke="#4177b0" strokeWidth="1.400">A</text></svg>
        <Tri />
        <svg width="28" height="27" viewBox="0 0 28 27"><rect x="0" y="20" width="28" height="7" fill="#fdfb00" /><text x="1" y="13" fontSize="17" fontWeight="600" fill="#555" letterSpacing="-1">ab</text><path d="M26 2L14 14" stroke="#777" strokeWidth="4" /><path d="M15 11L8 19L17 15Z" fill="#555" /></svg>
        <Tri />
        <svg width="29" height="27" viewBox="0 0 29 27"><rect x="0" y="20" width="29" height="7" fill="#e60c0c" /><text x="7" y="18" fontSize="22" fontWeight="600" fill="#555">A</text></svg>
        <Tri />
        <Letter $size={20.500}>Aa</Letter>
        <Tri />
        <Divider />
        <svg width="23" height="26" viewBox="0 0 23 26"><text x="0" y="25" fontSize="24" fontWeight="600" fill="#5a5a5a">A</text><path d="M14 6L18 1.500L22 6Z" fill="#3a77b5" /></svg>
        <svg width="23" height="26" viewBox="0 0 23 26"><text x="0" y="25" fontSize="19" fontWeight="700" fill="#5a5a5a">A</text><path d="M12 2L20 2L16 6.500Z" fill="#3a77b5" /></svg>
      </RibbonRow>
      <GroupFoot $l={132} $r={8} $size={19}>Font<Launcher /></GroupFoot>
    </Group>

    <Group $w={277}>
      <RibbonRow $stops={[1017, 1030, 1066, 1088, 1124, 1144, 1179, 1203, 1217, 1254, 1294]}>
        <span />
        <svg width="24" height="26" viewBox="0 0 24 26"><g fill="#3a77b5"><circle cx="3" cy="3" r="3" /><circle cx="3" cy="13" r="3" /><circle cx="3" cy="23" r="3" /></g><path d="M9 3H23M9 13H23M9 23H23" stroke="#666" strokeWidth="2" /></svg>
        <Tri />
        <svg width="25" height="28" viewBox="0 0 25 28"><g fontSize="10.500" fontWeight="700" fill="#3a77b5"><text x="0" y="7">1</text><text x="0" y="17.500">2</text><text x="0" y="28">3</text></g><path d="M9 3.500H25M9 14H25M9 24.500H25" stroke="#666" strokeWidth="2" /></svg>
        <Tri />
        <svg width="28" height="28" viewBox="0 0 28 28"><g fontSize="10.500" fontWeight="700" fill="#3a77b5"><text x="0" y="8">1</text><text x="6" y="17">a</text><text x="14" y="28">i</text></g><path d="M9 3.500H27M17 14H27M22 24.500H27" stroke="#666" strokeWidth="2" /></svg>
        <Tri />
        <Divider />
        <svg width="28" height="24" viewBox="0 0 28 24"><path d="M0 1.500H28M14 6.500H28M14 11.500H28M14 17H28M0 22.500H28" stroke="#666" strokeWidth="1.800" /><path d="M12 11.500H2M7 7L2 11.500L7 16" fill="none" stroke="#3a77b5" strokeWidth="2.800" /></svg>
        <svg width="28" height="24" viewBox="0 0 28 24"><path d="M0 1.500H28M14 6.500H28M14 11.500H28M14 17H28M0 22.500H28" stroke="#666" strokeWidth="1.800" /><path d="M0 11.500H10M5 7L10 11.500L5 16" fill="none" stroke="#3a77b5" strokeWidth="2.800" /></svg>
      </RibbonRow>
      <RibbonRow $stops={[1017, 1023, 1068, 1106, 1143, 1182, 1196, 1228, 1294]}>
        <span />
        <ActiveTool><Lines rows={[[0, 24], [0, 17], [0, 24], [0, 17]]} /></ActiveTool>
        <Lines rows={[[0, 24], [3, 21], [0, 24], [3, 21]]} />
        <Lines rows={[[0, 23], [6, 23], [0, 23], [6, 23]]} />
        <Lines rows={[[0, 24], [0, 24], [0, 24], [0, 24]]} />
        <Divider />
        <svg width="24" height="28" viewBox="0 0 24 28"><path d="M4.500 2V11M.8 5.500L4.500 1.500L8.200 5.500M4.500 17V26M.8 22.500L4.500 26.500L8.200 22.500" fill="none" stroke="#3a77b5" strokeWidth="2.200" /><path d="M10 6H24M10 11.500H24M10 17H24M10 22.500H22" stroke="#666" strokeWidth="1.800" /></svg>
        <Tri />
      </RibbonRow>
      <RibbonRow $stops={[1017, 1028, 1066, 1088, 1124, 1147, 1163, 1200, 1217, 1294]}>
        <span />
        <svg width="28" height="28" viewBox="0 0 28 28"><rect x=".8" y="21.500" width="26" height="5.500" fill="#fff" stroke="#777" strokeWidth="1.500" /><path d="M13 4L23 13L13 21L4 13Z" fill="#fff" stroke="#666" strokeWidth="1.600" /><path d="M10 10V2C10 0 15 0 15 2V8" fill="none" stroke="#666" strokeWidth="1.600" /><path d="M20 8C26 8 28 12 26 18C24 14 23 13 22 13Z" fill="#3a77b5" /></svg>
        <Tri />
        <svg width="24" height="24" viewBox="0 0 24 24"><path d="M1 1H22V21M1 1V21M11.500 1V21M1 11.500H22" fill="none" stroke="#555" strokeWidth="1.500" strokeDasharray="1.800 2.200" /><path d="M0 22.500H23" stroke="#555" strokeWidth="2.200" /></svg>
        <Tri />
        <Divider />
        <svg width="24" height="27" viewBox="0 0 24 27"><text x="0" y="11.500" fontSize="15" fontWeight="600" fill="#3a77b5">A</text><text x="0" y="26.500" fontSize="15" fontWeight="600" fill="#9a5fc0">Z</text><path d="M18.500 0V25M14.500 20L18.500 25L22.500 20" fill="none" stroke="#555" strokeWidth="1.800" /></svg>
        <Divider />
        <Letter $size={27} $weight={600} $c="#6a6a6a">¶</Letter>
      </RibbonRow>
      <GroupFoot $l={80} $r={6} $size={18}>Paragraph<Launcher /></GroupFoot>
    </Group>

    <Group $w={422}>
      <Gallery>
        <Style $on><Sample>AaBbCcDc</Sample>¶ Normal</Style>
        <Style><Sample>AaBbCcDc</Sample>No Spacing</Style>
        <Style><Sample $big>AaBbCc</Sample>Heading 1</Style>
        <GalleryScroll>
          <div><svg width="8" height="5"><path d="M0 5L4 0L8 5Z" fill="#b5b5b5" /></svg></div>
          <div><svg width="9" height="5"><path d="M0 0H9L4.500 5Z" fill="#666" /></svg></div>
          <div><svg width="11" height="10"><path d="M0 1H11" stroke="#666" strokeWidth="1.800" /><path d="M1 5H10L5.500 10Z" fill="#666" /></svg></div>
        </GalleryScroll>
      </Gallery>
      <GroupFoot $l={172} $r={7} $size={17.600}>Styles<Launcher /></GroupFoot>
    </Group>

    <Group $w={75}>
      <EditingCell>
        <FindBox><svg width="24" height="22" viewBox="0 0 24 22"><circle cx="15.500" cy="8" r="6.500" fill="none" stroke="#4f86be" strokeWidth="3" /><path d="M10 12.500L2 20" stroke="#3a77b5" strokeWidth="4" /></svg></FindBox>
        Editing
        <Down><Down><Tri /></Down></Down>
      </EditingCell>
    </Group>
    <Collapse><svg width="16" height="11" viewBox="0 0 16 11"><path d="M1.500 9.500L8 2.500L14.500 9.500" fill="none" stroke="#6a6a6a" strokeWidth="3.200" /></svg></Collapse>
  </Ribbon>
);

const WordWindow = () => (
  <Word>
    <WordHeader />
    <RibbonBar />
    <Workspace>
      <Canvas>
        <RulerRow>
          <TabSelector><svg width="11" height="10"><path d="M1.500 0V8H11" fill="none" stroke="#6d6d6d" strokeWidth="3" /></svg></TabSelector>
          <Ruler>
            <Ticks>{hTicks.map((k) => <Tick key={k} $kind={kindOf(k)}>{kindOf(k) === 'num' ? k / 8 : null}</Tick>)}</Ticks>
            <LeftMarker width="16" height="37" viewBox="0 0 16 37"><path d="M1 1H15V6L8 13L1 6Z M8 13L15 20V25H1V20Z M1 25H15V36H1Z" fill="#fff" stroke="#8a8a8a" strokeWidth="1.600" /></LeftMarker>
            <RightMarker width="16" height="14" viewBox="0 0 16 14"><path d="M8 1L15 8V13H1V8Z" fill="#fff" stroke="#8a8a8a" strokeWidth="1.600" /></RightMarker>
          </Ruler>
        </RulerRow>
        <DocRow>
          <VRuler>
            <VTicks>{vTicks.map((k) => <VTick key={k} $kind={kindOf(k)}>{kindOf(k) === 'num' ? <span>{Math.abs(k / 8)}</span> : null}</VTick>)}</VTicks>
          </VRuler>
          <Page>
            <Salutation>To My Dearest Friend,</Salutation>
            <Para>{lines.map((l) => <span key={l}>{l}</span>)}</Para>
            <Para>Sincerely,</Para>
            <Signature>
              <svg width="122" height="50" viewBox="0 0 122 50" fill="none" stroke="#0c0c0c" strokeLinecap="round">
                <path d="M18 20C32 20 50 10 48 4C45 -2 20 4 8 18C-3 32 0 46 14 46C34 46 52 24 66 22C84 18 92 26 98 20" strokeWidth="1.500" />
                <path d="M24 20C36 18 49 10 47.500 4" strokeWidth="3.400" />
                <path d="M66 22C48 24 38 34 44 42C54 50 74 40 82 30C94 14 104 3 120 1" strokeWidth="1.500" />
                <path d="M44 30C52 20 74 22 92 22" strokeWidth="3.600" />
                <path d="M106 6C98 18 90 30 92 38C94 45 101 44 106 39" strokeWidth="4" />
              </svg>
            </Signature>
          </Page>
        </DocRow>
      </Canvas>
      <VScroll>
        <ScrollButton><Arrow $d="up" /></ScrollButton>
        <VTrack><VThumb /></VTrack>
        <ScrollButton><Arrow $d="down" /></ScrollButton>
      </VScroll>
    </Workspace>
    <HScroll>
      <ScrollButton><Arrow $d="left" /></ScrollButton>
      <HTrack><HThumb /></HTrack>
      <ScrollButton><Arrow $d="right" /></ScrollButton>
    </HScroll>
    <Status $stops={[557, 567, 697, 801, 1382, 1427, 1512, 1565, 1582, 1760, 1799, 1869]}>
      <span />
      <Down>Page 1 of 1</Down>
      <Down>0 words</Down>
      <svg width="26" height="23" viewBox="0 0 26 23"><path d="M1 2H8L11 4L14 2H20M1 2V20H8L11 22L14 20H21V14M11 4V22" fill="none" stroke="#666" strokeWidth="1.700" /><path d="M24 4L15 14L13.500 17L17 15.500L26 6Z" fill="#666" /></svg>
      <svg width="23" height="22" viewBox="0 0 23 22"><path d="M1 1H8L11.500 3L15 1H22V19H15L11.500 21.500L8 19H1ZM11.500 3V21" fill="none" stroke="#666" strokeWidth="1.600" /><path d="M3.500 5H9M3.500 8.500H9M3.500 12H9M3.500 15.500H9M14 5H19.500M14 8.500H19.500M14 12H19.500M14 15.500H19.500" stroke="#666" strokeWidth="1.500" /></svg>
      <PrintView><svg width="24" height="22" viewBox="0 0 24 22"><rect x="1" y="1" width="22" height="20" fill="none" stroke="#666" strokeWidth="1.700" /><path d="M4 5H20M4 8.500H20M4 12H20M4 15.500H20M4 18.500H20" stroke="#666" strokeWidth="1.300" /></svg></PrintView>
      <svg width="24" height="23" viewBox="0 0 24 23"><path d="M12 20H1V1H19V9M4 5H16M4 8.500H16M4 12H11M4 15.500H10" fill="none" stroke="#666" strokeWidth="1.600" /><circle cx="17" cy="16" r="6" fill="#f0f0f0" stroke="#777" strokeWidth="1.600" /><path d="M17 10A6 6 0 0 1 23 16L17 17Z" fill="#777" /></svg>
      <svg width="11" height="4"><rect width="11" height="3.500" fill="#666" /></svg>
      <svg width="172" height="20"><path d="M0 10H172" stroke="#a5a5a5" strokeWidth="1.800" /><path d="M87.500 5V15" stroke="#999" strokeWidth="1.500" /><rect x="74" y="0" width="6.500" height="19" fill="#636363" /></svg>
      <svg width="14" height="14"><path d="M0 7H14M7 0V14" stroke="#555" strokeWidth="3.500" /></svg>
      <Down>90%</Down>
    </Status>
  </Word>
);

/* ---------- Taskbar ---------- */

const Taskbar = styled.div`
  position: relative;
  height: 65px;
  flex: none;
  display: flex;
  background: linear-gradient(90deg, #20343f 0, #22343f 40%, #20303e 60%, #1c2a40 78%, #1c2541 100%);
  box-shadow: inset 0 -1.500px 0 #2c7fae;
`;
const Start = styled.div`
  width: 77px;
  display: grid;
  place-items: center;
`;
const Search = styled.div`
  width: 557px;
  margin-bottom: 1px;
  display: flex;
  align-items: center;
  gap: 19px;
  padding-left: 17px;
  background: #f1f1f1;
  border-left: 2px solid #c9ced0;
  border-right: 2px solid #c9ced0;
  color: #4a4a4a;
  font-size: 23.1px;
`;
const SearchHint = styled.span`
  padding-top: 5px;
`;
const Pins = styled.div`
  display: grid;
  grid-template-columns: 77px repeat(8, 81.300px);
  flex: 1;
`;
const Pin = styled.div`
  display: grid;
  place-items: center;
  position: relative;
  padding-top: 1px;
  padding-right: ${(p) => p.$pull || 0}px;
  &::after {
    content: '';
    position: absolute;
    bottom: 0;
    width: 66px;
    height: 4px;
    left: 8px;
    background: ${(p) => (p.$open === 'multi' ? 'linear-gradient(90deg, #6fe3c4 51px, #2f8a7c 51px)' : p.$open ? '#6fe3c4' : 'transparent')};
  }
`;
const Tray = styled.div`
  display: grid;
  grid-template-columns: ${(p) => tracks(p.$stops)};
  align-items: center;
`;
const Notice = styled.div`
  position: relative;
`;
const Badge = styled.div`
  position: absolute;
  left: 12px;
  top: 12px;
  width: 27px;
  height: 27px;
  border-radius: 50%;
  background: #2b2d38;
  border: 2px solid #5e606b;
  color: #fff;
  font: 700 18px/23px "Open Sans", sans-serif;
  text-align: center;
`;
const ShowDesktop = styled.div`
  align-self: stretch;
  border-left: 2px solid #7c8597;
`;

const Taskstrip = () => (
  <Taskbar>
    <Start><svg width="27" height="27" viewBox="0 0 27 27"><path d="M0 3.500L11.500 2V12.800H0ZM13 1.800L27 0V12.800H13ZM0 14.200H11.500V25L0 23.500ZM13 14.200H27V27L13 25.200Z" fill="#fff" /></svg></Start>
    <Search>
      <svg width="27" height="27" viewBox="0 0 27 27"><circle cx="17" cy="9.500" r="8.500" fill="none" stroke="#333" strokeWidth="2" /><path d="M11 16L1 26.500" stroke="#333" strokeWidth="2.200" /></svg>
      <SearchHint>Type here to search</SearchHint>
    </Search>
    <Pins>
      <Pin><svg width="28" height="28"><circle cx="14" cy="14" r="11.300" fill="none" stroke="#f4f6f7" strokeWidth="3.300" /></svg></Pin>
      <Pin $pull={4}><svg width="27" height="27" viewBox="0 0 27 27"><path d="M1 0V4H18V0M1 27V23H18V27M2.500 8H16.500V19H2.500ZM25.500 0V27" fill="none" stroke="#d9dee1" strokeWidth="1.500" /><rect x="23" y="7" width="4" height="5" fill="#fff" /></svg></Pin>
      <Pin><FaEdgeLegacy size={35} color="#0b7fdc" /></Pin>
      <Pin $open="multi"><svg width="36" height="30" viewBox="0 0 36 30"><path d="M1 1H15L18 4H35V28H1Z" fill="#e0a92d" /><path d="M1 7H35V29H1Z" fill="#fbd866" /><path d="M7 29V19C7 16 9 15.500 11 15.500H26C28 15.500 30 16 30 19V29H23V23H14V29Z" fill="#3f93cc" /></svg></Pin>
      <Pin><svg width="38" height="39" viewBox="0 0 38 39"><path d="M10 14V3.500C10 1.800 11 1.300 12 1.300H26C27 1.300 28.500 1.800 28.500 3.500V14" fill="none" stroke="#f1f1f1" strokeWidth="2.600" /><path d="M0 10H38V37C38 38.500 37 39 36 39H2C1 39 0 38.500 0 37Z" fill="#f4f4f4" /><rect x="12" y="18" width="6.500" height="6.500" fill="#e9512a" /><rect x="20" y="18" width="6.500" height="6.500" fill="#7fba28" /><rect x="12" y="26" width="6.500" height="6.500" fill="#1ba1e8" /><rect x="20" y="26" width="6.500" height="6.500" fill="#fbb919" /></svg></Pin>
      <Pin><svg width="40" height="33" viewBox="0 0 40 33"><path d="M0 12L20 0L40 12V33H0Z" fill="#fff" /><path d="M3 12.500L38 13L27 21L32 28L22 20Z" fill="#20323f" /></svg></Pin>
      <Pin $open="one">
        <svg width="40" height="42" viewBox="0 0 40 42">
          <ChromeIcon size={38} id="ct" />
          <circle cx="30.500" cy="31" r="10.800" fill="#b9c9dc" /><circle cx="31" cy="27.500" r="5.500" fill="#7d4f43" /><path d="M23 39C24 31 28 31 31 31C35 31 38 33 38.500 38C35 42.500 27 42.500 23 39Z" fill="#4f9fc4" /><circle cx="31.500" cy="28.500" r="3.500" fill="#d99a80" />
        </svg>
      </Pin>
      <Pin $open="one"><svg width="35" height="35" viewBox="0 0 35 35"><rect x="17" y="4" width="17" height="27" fill="#fff" stroke="#2b579a" /><path d="M20 8H31M20 12H31M20 16H31M20 20H31M20 24H31M20 28H31" stroke="#2b579a" strokeWidth="1.600" /><path d="M0 3.500L20.500 0V35L0 31.500Z" fill="#2a5699" /><text x="2.500" y="23.500" fontSize="16" fontWeight="700" fill="#fff">W</text></svg></Pin>
      <Pin $open="one" $pull={2}><svg width="31" height="31" viewBox="0 0 32 32"><circle cx="16" cy="16" r="8.800" fill="none" stroke="#fff" strokeWidth="4.500" />{[0, 45, 90, 135, 180, 225, 270, 315].map((a) => <rect key={a} x="13" y="0" width="6" height="6.500" rx="1.500" fill="#fff" transform={`rotate(${a + 22.5} 16 16)`} />)}</svg></Pin>
    </Pins>
    <Tray $stops={[1748.5, 1785, 1824, 1866, 1902, 2064.5, 2125, 2129]}>
      <svg width="20" height="12" viewBox="0 0 20 12"><path d="M1 11L10 1.500L19 11" fill="none" stroke="#dfe3ea" strokeWidth="1.800" /></svg>
      <svg width="27" height="23" viewBox="0 0 27 23"><path d="M5 18C-1 17 -1 9 5 8C7 1 17 -1 20 5C23 7 24 12 22 16L15 18Z" fill="#d7d9dd" /><path d="M10 18C5 14 8 8 13 8C17 6 22 8 22 12L19 18Z" fill="#b0b3b9" /><circle cx="19" cy="15.500" r="7" fill="#7f8186" /><path d="M17 12V19M21 12V19" stroke="#ddd" strokeWidth="1.600" /></svg>
      <svg width="27" height="19" viewBox="0 0 27 19"><rect x="6" y="4" width="18" height="13" fill="#fff" stroke="#9aa1ae" strokeWidth="1.500" /><rect x="24.500" y="8" width="2.500" height="5" fill="#fff" /><path d="M1 3H8V8C8 10 1 10 1 8ZM2.500 0V3M6.500 0V3M4.500 9V14H7" stroke="#dfe3ea" strokeWidth="1.500" fill="#1c2a40" /></svg>
      <svg width="22" height="22" viewBox="0 0 22 22"><path d="M1 21C1 10 9 1.500 21 1.500M6 21C6 13 12 6.500 21 6.500M11 21C11 16 15 11.500 21 11.500" fill="none" stroke="#b9c0cc" strokeWidth="1.800" /><circle cx="19" cy="19" r="2.300" fill="#fff" /></svg>
      <svg width="26" height="22" viewBox="0 0 26 22"><path d="M1 7H5L10 1V21L5 15H1Z" fill="none" stroke="#e7eaf0" strokeWidth="1.600" /><path d="M13 8C14.500 9.500 14.500 12.500 13 14.500M16.500 5C19.500 8 19.500 14 16.500 17.500M20.500 2.500C25 7 25 15 20.500 20" fill="none" stroke="#aab2c2" strokeWidth="1.600" /></svg>
      <Notice>
        <svg width="27" height="27" viewBox="0 0 27 27"><path d="M0 0H27V20H14L12 26L7 20H0Z" fill="#fff" /><path d="M5 6H22M5 10.500H22M5 15H16" stroke="#5a606e" strokeWidth="1.600" /></svg>
        <Badge>4</Badge>
      </Notice>
      <ShowDesktop />
    </Tray>
  </Taskbar>
);

export default function App() {
  return (
    <>
      <Global />
      <Monitor>
        <BezelTop><Logo>lenovo</Logo><LogoDot /></BezelTop>
        <Middle>
          <LeftEdge />
          <Screen>
            <Beam width="1200" height="200" viewBox="0 0 1200 200"><path d="M300 0L640 90L1200 200V0Z" fill="#0a8df0" opacity=".16" /><path d="M300 0L640 90" stroke="#3bbcff" strokeOpacity=".22" strokeWidth="2" /></Beam>
            <Shortcut $x={151} $y={124}><ChromeIcon size={74} id="cd" /><ShortcutLabel $gap={-0.5}>{'Google\nChrome'}</ShortcutLabel></Shortcut>
            <Shortcut $x={154} $y={302}><EdgeIcon /><ShortcutLabel $gap={-2} $shift={-2}>{'Microsoft\nEdge'}</ShortcutLabel></Shortcut>
            <Shortcut $x={151} $y={640}><FolderIcon /><ShortcutLabel $soft $gap={-2} $shift={-4}>Priv</ShortcutLabel></Shortcut>
            <Shortcut $x={274} $y={642}><FolderIcon /><ShortcutLabel $soft $gap={-2} $shift={-8}>{'Early\nTrial'}</ShortcutLabel></Shortcut>
            <Shortcut $x={151} $y={799}><FolderIcon /><ShortcutLabel $soft $gap={2} $shift={-6}>Family</ShortcutLabel></Shortcut>
            <Shortcut $x={273} $y={800}><FolderIcon /><ShortcutLabel $soft $gap={-2} $shift={-7}>Docs</ShortcutLabel></Shortcut>
            <Shortcut $x={151} $y={954}><FolderIcon /><ShortcutLabel $soft $gap={2} $shift={-5}>19-001</ShortcutLabel></Shortcut>
            <Shortcut $x={274} $y={954}><FolderIcon /><ShortcutLabel $soft $gap={-2} $shift={-3}>{'New\nFolder'}</ShortcutLabel></Shortcut>
            <ExplorerWindow />
            <WordWindow />
            <Taskstrip />
          </Screen>
          <RightEdge>
            <BezelButton /><BezelButton /><BezelButton /><BezelButton />
            <PowerButton><svg width="14" height="15" viewBox="0 0 14 15"><path d="M4 4A5.500 5.500 0 1 0 10 4M7 0V8" fill="none" stroke="#aeb0b3" strokeWidth="2" /></svg></PowerButton>
          </RightEdge>
        </Middle>
      </Monitor>
    </>
  );
}
